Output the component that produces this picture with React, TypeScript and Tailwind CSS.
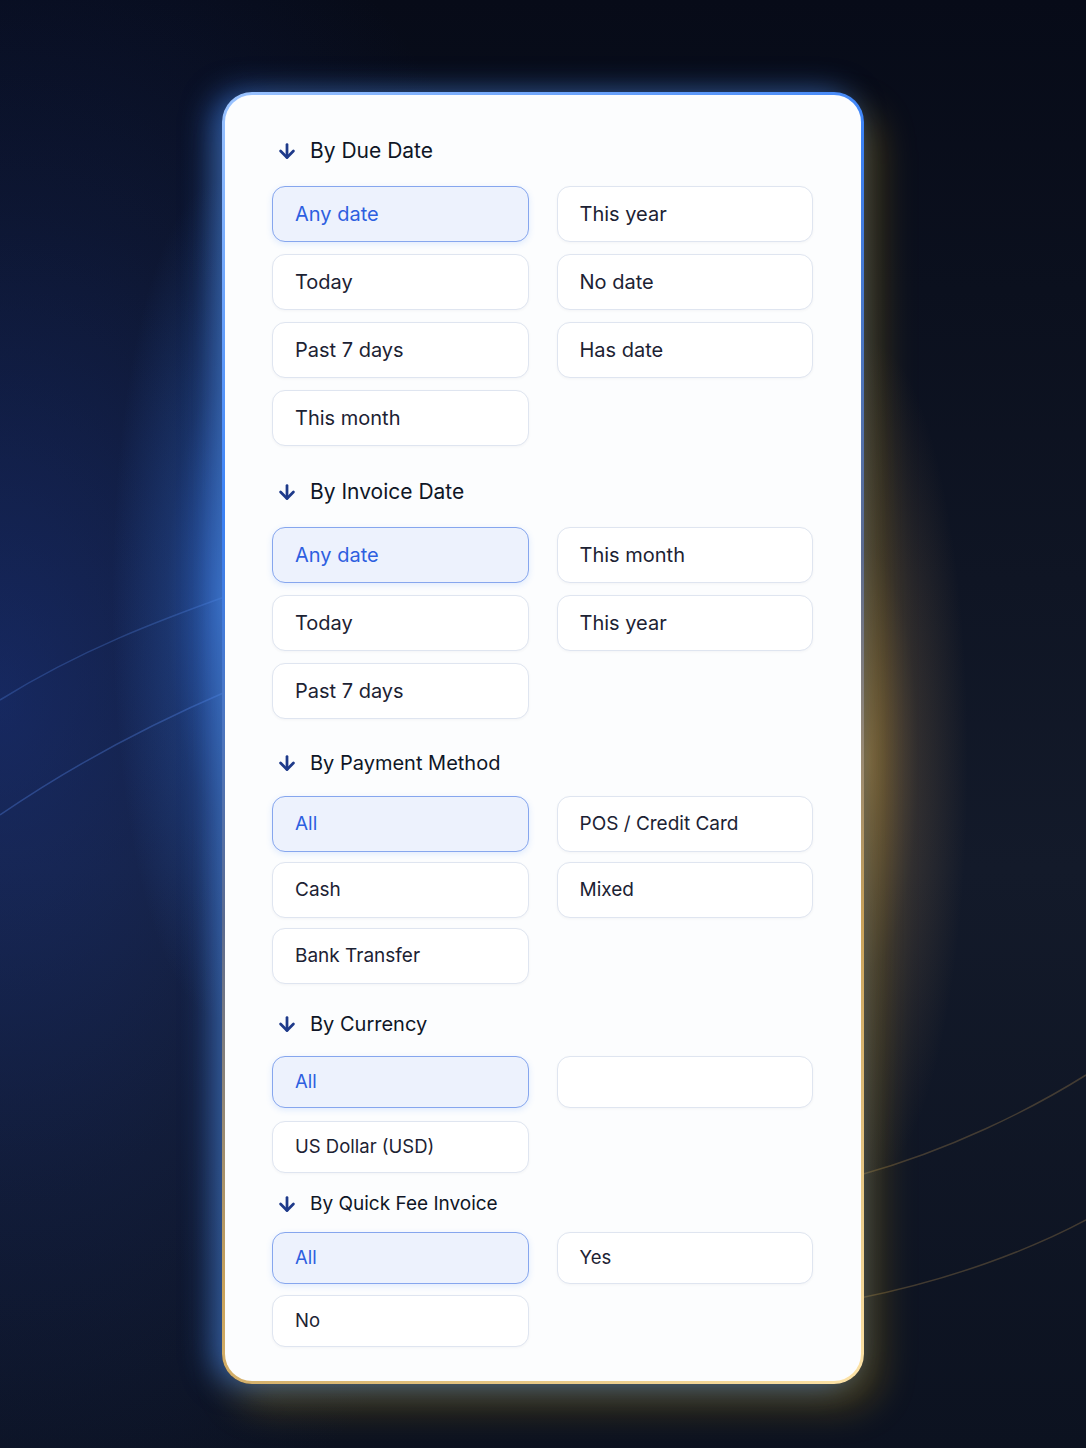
import React from 'react';
import { ArrowDown } from 'lucide-react';

type Section = {
  title: string;
  options: string[];
  selected: number;
  headerGap: string;
  rowH: string;
  rowGap: string;
  after: string;
  titleSize: string;
  textSize: string;
};

const sections: Section[] = [
  {
    title: 'By Due Date',
    options: ['Any date', 'This year', 'Today', 'No date', 'Past 7 days', 'Has date', 'This month'],
    selected: 0,
    headerGap: 'mt-[21px]',
    rowH: 'h-[56px]',
    rowGap: 'gap-y-[12px]',
    after: 'mb-[32px]',
    titleSize: 'text-[21px]',
    textSize: 'text-[20px]',
  },
  {
    title: 'By Invoice Date',
    options: ['Any date', 'This month', 'Today', 'This year', 'Past 7 days'],
    selected: 0,
    headerGap: 'mt-[21px]',
    rowH: 'h-[56px]',
    rowGap: 'gap-y-[12px]',
    after: 'mb-[30px]',
    titleSize: 'text-[21px]',
    textSize: 'text-[20px]',
  },
  {
    title: 'By Payment Method',
    options: ['All', 'POS / Credit Card', 'Cash', 'Mixed', 'Bank Transfer'],
    selected: 0,
    headerGap: 'mt-[19px]',
    rowH: 'h-[56px]',
    rowGap: 'gap-y-[10px]',
    after: 'mb-[26px]',
    titleSize: 'text-[20px]',
    textSize: 'text-[19px]',
  },
  {
    title: 'By Currency',
    options: ['All', '', 'US Dollar (USD)'],
    selected: 0,
    headerGap: 'mt-[18px]',
    rowH: 'h-[52px]',
    rowGap: 'gap-y-[13px]',
    after: 'mb-[17px]',
    titleSize: 'text-[20px]',
    textSize: 'text-[18.5px]',
  },
  {
    title: 'By Quick Fee Invoice',
    options: ['All', 'Yes', 'No'],
    selected: 0,
    headerGap: 'mt-[14px]',
    rowH: 'h-[52px]',
    rowGap: 'gap-y-[11px]',
    after: 'mb-0',
    titleSize: 'text-[19px]',
    textSize: 'text-[18.5px]',
  },
];

const Option: React.FC<{ label: string; active: boolean; h: string; size: string }> = ({ label, active, h, size }) => (
  <div
    className={`${h} ${size} flex items-center px-[22px] rounded-[13px] border ${
      active
        ? 'bg-[#edf2fd] border-[#86a6ee] text-[#2d5fe0] shadow-[0_2px_6px_rgba(59,130,246,0.15)]'
        : 'bg-white border-[#dfe5f0] text-[#1c2233] shadow-[0_1px_3px_rgba(15,23,42,0.04)]'
    }`}
  >
    {label}
  </div>
);

const FilterSection: React.FC<{ s: Section }> = ({ s }) => (
  <div className={s.after}>
    <div className="h-[28px] flex items-center">
      <ArrowDown size={22} strokeWidth={3} className="text-[#1e3a8a] ml-[4px]" />
      <span className={`ml-[12px] ${s.titleSize} text-[#0f1626]`}>{s.title}</span>
    </div>
    <div className={`${s.headerGap} grid grid-cols-2 gap-x-[28px] ${s.rowGap}`}>
      {s.options.map((o, i) => (
        <Option key={i} label={o} active={i === s.selected} h={s.rowH} size={s.textSize} />
      ))}
    </div>
  </div>
);

export default function App() {
  return (
    <div
      className="relative w-full h-[1448px] overflow-hidden bg-[#0a1020] bg-[radial-gradient(ellipse_110px_420px_at_222px_600px,rgba(59,130,246,0.55),rgba(59,130,246,0.2)_50%,rgba(59,130,246,0)_100%),radial-gradient(ellipse_100px_420px_at_868px_760px,rgba(230,175,90,0.4),rgba(230,175,90,0.14)_50%,rgba(230,175,90,0)_100%),radial-gradient(ellipse_600px_900px_at_0px_700px,rgba(30,64,175,0.42),rgba(30,64,175,0.15)_55%,rgba(30,64,175,0)_100%),linear-gradient(180deg,#070b18,#131a2a_60%,#0c1220)]"
      style={{ fontFamily: 'Inter, "Noto Sans", sans-serif' }}
    >
      <svg className="absolute inset-0 w-full h-full" viewBox="0 0 1086 1448" fill="none">
        <path d="M0 700 C 80 650, 160 620, 230 595" stroke="rgba(96,150,255,0.25)" strokeWidth="1.5" />
        <path d="M0 815 C 80 760, 160 720, 230 690" stroke="rgba(96,150,255,0.3)" strokeWidth="1.5" />
        <path d="M860 1175 C 950 1150, 1030 1110, 1086 1075" stroke="rgba(220,170,90,0.25)" strokeWidth="1.5" />
        <path d="M860 1298 C 950 1280, 1030 1250, 1086 1220" stroke="rgba(220,170,90,0.25)" strokeWidth="1.5" />
      </svg>
      <div className="relative mt-[92px] mx-auto w-[642px] rounded-[30px] p-[3px] bg-[linear-gradient(150deg,#9cc4ff,#3b82f6_25%,#5b6b8f_50%,#c9a25a_72%,#fde3a7)] shadow-[-10px_0_30px_rgba(59,130,246,0.6),12px_20px_40px_rgba(234,179,8,0.3)]">
        <div className="rounded-[27px] bg-[#fcfdfe] pt-[42px] pb-[34px] pl-[47px] pr-[48px]">
          {sections.map((s) => (
            <FilterSection key={s.title} s={s} />
          ))}
        </div>
      </div>
    </div>
  );
}
